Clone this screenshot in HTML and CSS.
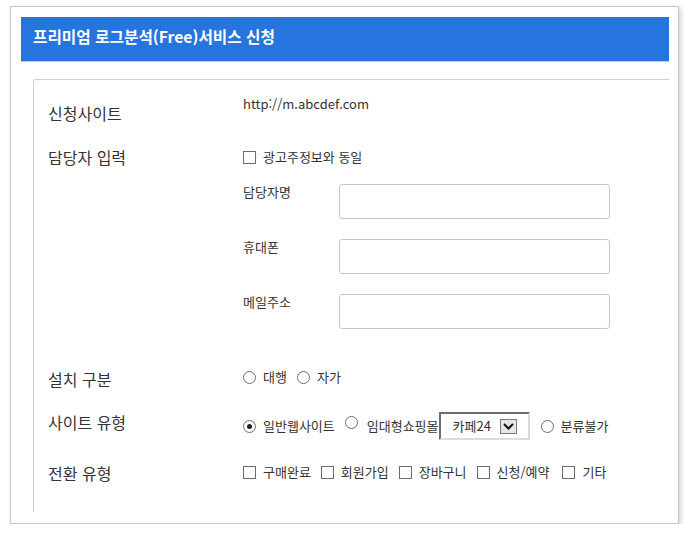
FILE: index.html
```html
<!DOCTYPE html>
<html lang="ko">

<head>
    <meta charset="utf-8">
    <title>프리미엄 로그분석 신청</title>
    <link rel="stylesheet" href="styles.css">
</head>

<body>

    <div id="container">

        <h2 class="panel-head">프리미엄 로그분석(Free)서비스 신청</h2>

        <div class="panel-body">
            <form id="applyForm" class="form-box">

                <div class="row first">
                    <div class="label lower">신청사이트</div>
                    <div class="value">http://m.abcdef.com</div>
                </div>

                <div class="row second">
                    <div class="label">담당자 입력</div>
                    <div class="value">
                        <div class="opt-line">
                            <span class="opt"><span class="check"></span>광고주정보와 동일</span>
                        </div>

                        <div class="sub-row first-sub">
                            <label class="sub-label" for="name">담당자명</label>
                            <input class="field" type="text" id="name" name="name">
                        </div>
                        <div class="sub-row">
                            <label class="sub-label" for="phone">휴대폰</label>
                            <input class="field" type="text" id="phone" name="phone">
                        </div>
                        <div class="sub-row">
                            <label class="sub-label" for="email">메일주소</label>
                            <input class="field" type="text" id="email" name="email">
                        </div>
                    </div>
                </div>

                <div class="row third">
                    <div class="label">설치 구분</div>
                    <div class="value opt-line">
                        <span class="opt"><span class="radio"></span>대행</span>
                        <span class="opt"><span class="radio"></span>자가</span>
                    </div>
                </div>

                <div class="row fourth">
                    <div class="label">사이트 유형</div>
                    <div class="value opt-line tall">
                        <span class="opt"><span class="radio on"></span>일반웹사이트</span>
                        <span class="opt tight"><span class="radio raised"></span>임대형쇼핑몰</span>
                        <div class="select-box">
                            <span>카페24</span>
                            <span class="select-btn">
                                <svg width="11" height="7" viewBox="0 0 11 7"><path d="M1 1 L5.5 5.5 L10 1" fill="none" stroke="#111" stroke-width="2"/></svg>
                            </span>
                        </div>
                        <span class="opt"><span class="radio"></span>분류불가</span>
                    </div>
                </div>

                <div class="row fifth">
                    <div class="label">전환 유형</div>
                    <div class="value opt-line">
                        <span class="opt"><span class="check"></span>구매완료</span>
                        <span class="opt"><span class="check"></span>회원가입</span>
                        <span class="opt"><span class="check"></span>장바구니</span>
                        <span class="opt wide"><span class="check"></span>신청/예약</span>
                        <span class="opt"><span class="check"></span>기타</span>
                    </div>
                </div>

            </form>
        </div>

    </div>

</body>
</html>
```

FILE: styles.css
```css
        body {
            font-family: "Noto Sans CJK KR", sans-serif;
            background-color: #fff;
            margin: 0;
            padding: 0;
            color: #333;
        }

        #container {
            margin: 6px 0 0 10px;
            width: 648px;
            height: 506px;
            padding: 10px 9px 0 10px;
            border: 1px solid #c8c8c8;
            box-shadow: 2px 2px 5px rgba(0, 0, 0, 0.18);
        }

        .panel-head {
            margin: 0;
            height: 34px;
            padding: 10px 0 0 12px;
            background-color: #2675de;
            border-bottom: 1px solid #b5cff2;
            color: #fff;
            font-size: 15.7px;
            line-height: 20px;
            font-weight: bold;
        }

        .panel-body {
            height: 434px;
            padding: 17px 0 0 12px;
            overflow: hidden;
        }

        .form-box {
            margin: 0;
            width: 700px;
            height: 433px;
            padding: 15px 0 0 14px;
            border: 1px solid #d0d0d0;
            border-bottom: none;
            border-radius: 3px 0 0 0;
            box-sizing: border-box;
        }

        .row {
            display: flex;
            align-items: flex-start;
        }

        .label {
            width: 195px;
            flex-shrink: 0;
            font-size: 16px;
            line-height: 20px;
        }

        .label.lower {
            margin-top: 8px;
        }

        .value {
            font-size: 13px;
            line-height: 18px;
        }

        .second {
            margin-top: 24px;
        }

        .second .value {
            margin-top: 1px;
        }

        .third {
            margin-top: 40px;
        }

        .third .value {
            margin-top: -1px;
        }

        .fourth {
            margin-top: 23px;
        }

        .fifth {
            margin-top: 23px;
        }

        .opt-line {
            display: flex;
            align-items: center;
        }

        .opt-line.tall {
            height: 28px;
        }

        .opt {
            display: flex;
            align-items: center;
            margin-right: 10px;
            white-space: nowrap;
        }

        .opt.tight {
            margin-right: 0;
        }

        .opt.wide {
            margin-right: 13px;
        }

        .check {
            width: 11px;
            height: 11px;
            border: 1px solid #6d6d6d;
            margin-right: 7px;
        }

        .radio {
            width: 11px;
            height: 11px;
            border: 1px solid #6d6d6d;
            border-radius: 50%;
            margin-right: 7px;
            position: relative;
        }

        .radio.raised {
            margin-right: 9px;
            margin-bottom: 8px;
        }

        .radio.on::after {
            content: "";
            position: absolute;
            left: 3px;
            top: 3px;
            width: 5px;
            height: 5px;
            border-radius: 50%;
            background-color: #222;
        }

        .select-box {
            display: flex;
            align-items: center;
            justify-content: space-between;
            width: 64px;
            height: 24px;
            padding: 0 11px 0 12px;
            margin-right: 11px;
            border: 2px solid;
            border-color: #6e6e6e #dcdcdc #dcdcdc #6e6e6e;
        }

        .select-btn {
            display: flex;
            align-items: center;
            justify-content: center;
            width: 15px;
            height: 13px;
            border: 1px solid #7a7a7a;
            background-color: #e6e6e6;
        }

        .sub-row {
            display: flex;
            align-items: flex-start;
            margin-top: 19px;
        }

        .sub-row.first-sub {
            margin-top: 17px;
        }

        .sub-label {
            width: 96px;
            font-size: 13px;
            line-height: 18px;
        }

        .field {
            width: 271px;
            height: 35px;
            margin: 1px 0 0 0;
            border: 1px solid #c6c6c6;
            border-radius: 3px;
            box-sizing: border-box;
        }
```
